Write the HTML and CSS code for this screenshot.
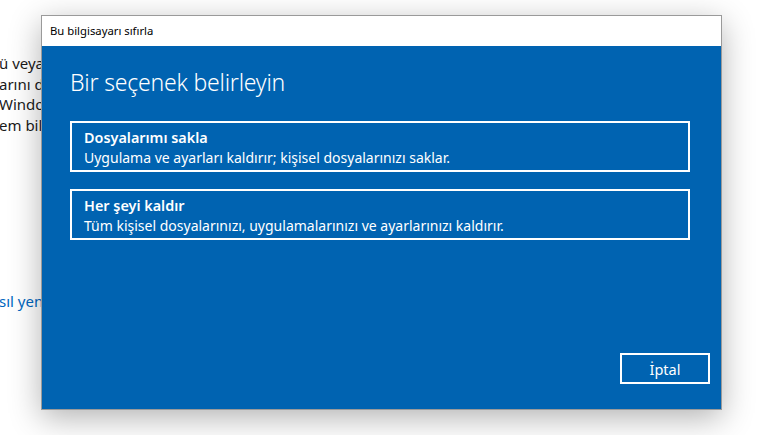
FILE: index.html
```html
<!DOCTYPE html>
<html lang="tr">
<head>
<meta charset="utf-8">
<link rel="stylesheet" href="styles.css">
</head>
<body>
<div class="page">
  <div class="page-text">
    <p class="para">ü veya<br>arını de<br>Windov<br>em bilg</p>
    <a class="link" href="#">sıl yeni</a>
  </div>

  <div class="dialog">
    <div class="titlebar">Bu bilgisayarı sıfırla</div>
    <div class="content">
      <h1 class="heading">Bir seçenek belirleyin</h1>
      <div class="options">
        <div class="option">
          <div class="option-title">Dosyalarımı sakla</div>
          <div class="option-desc">Uygulama ve ayarları kaldırır; kişisel dosyalarınızı saklar.</div>
        </div>
        <div class="option">
          <div class="option-title">Her şeyi kaldır</div>
          <div class="option-desc">Tüm kişisel dosyalarınızı, uygulamalarınızı ve ayarlarınızı kaldırır.</div>
        </div>
      </div>
      <div class="footer">
        <button class="btn">İptal</button>
      </div>
    </div>
  </div>
</div>
</body>
</html>
```
FILE: styles.css
```css
* { box-sizing: border-box; }
html, body { margin: 0; padding: 0; }
body {
  background: #ffffff;
  font-family: "Noto Sans", "Open Sans", sans-serif;
  width: 774px;
  height: 435px;
  overflow: hidden;
}
.page {
  position: relative;
  width: 774px;
  height: 435px;
}
.page-text {
  width: 41px;
  overflow: hidden;
  padding-top: 53px;
  font-size: 15px;
  color: #1a1a1a;
}
.para {
  margin: 0 0 0 -1px;
  line-height: 20.5px;
  white-space: nowrap;
}
.link {
  display: block;
  margin-top: 156px;
  margin-left: -1px;
  color: #0067c0;
  text-decoration: none;
  white-space: nowrap;
}
.dialog {
  position: absolute;
  left: 41px;
  top: 15px;
  width: 681px;
  height: 395px;
  border: 1px solid #9a9a9a;
  background: #0063b1;
  box-shadow: 0 8px 30px rgba(0,0,0,0.30);
  display: flex;
  flex-direction: column;
}
.titlebar {
  height: 30px;
  background: #ffffff;
  color: #000;
  font-size: 11.3px;
  padding: 7px 0 0 8px;
}
.content {
  flex: 1;
  display: flex;
  flex-direction: column;
  padding: 20px 31px 25px 28px;
  color: #ffffff;
}
.heading {
  margin: 0;
  font-weight: 300;
  font-size: 23px;
  line-height: 32px;
  letter-spacing: -0.2px;
}
.options {
  margin-top: 23px;
  display: flex;
  flex-direction: column;
  gap: 17px;
}
.option {
  border: 2px solid #ffffff;
  height: 51px;
  padding: 5px 12px 0 12px;
}
.option-title {
  font-weight: 600;
  font-size: 14.4px;
  line-height: 20px;
}
.option-desc {
  font-size: 14px;
  line-height: 20px;
}
.footer {
  margin-top: auto;
  display: flex;
  justify-content: flex-end;
  margin-right: -20px;
}
.btn {
  width: 90px;
  height: 31px;
  background: transparent;
  border: 2px solid #ffffff;
  color: #ffffff;
  font-family: inherit;
  font-size: 14.5px;
  padding: 0;
}
```
